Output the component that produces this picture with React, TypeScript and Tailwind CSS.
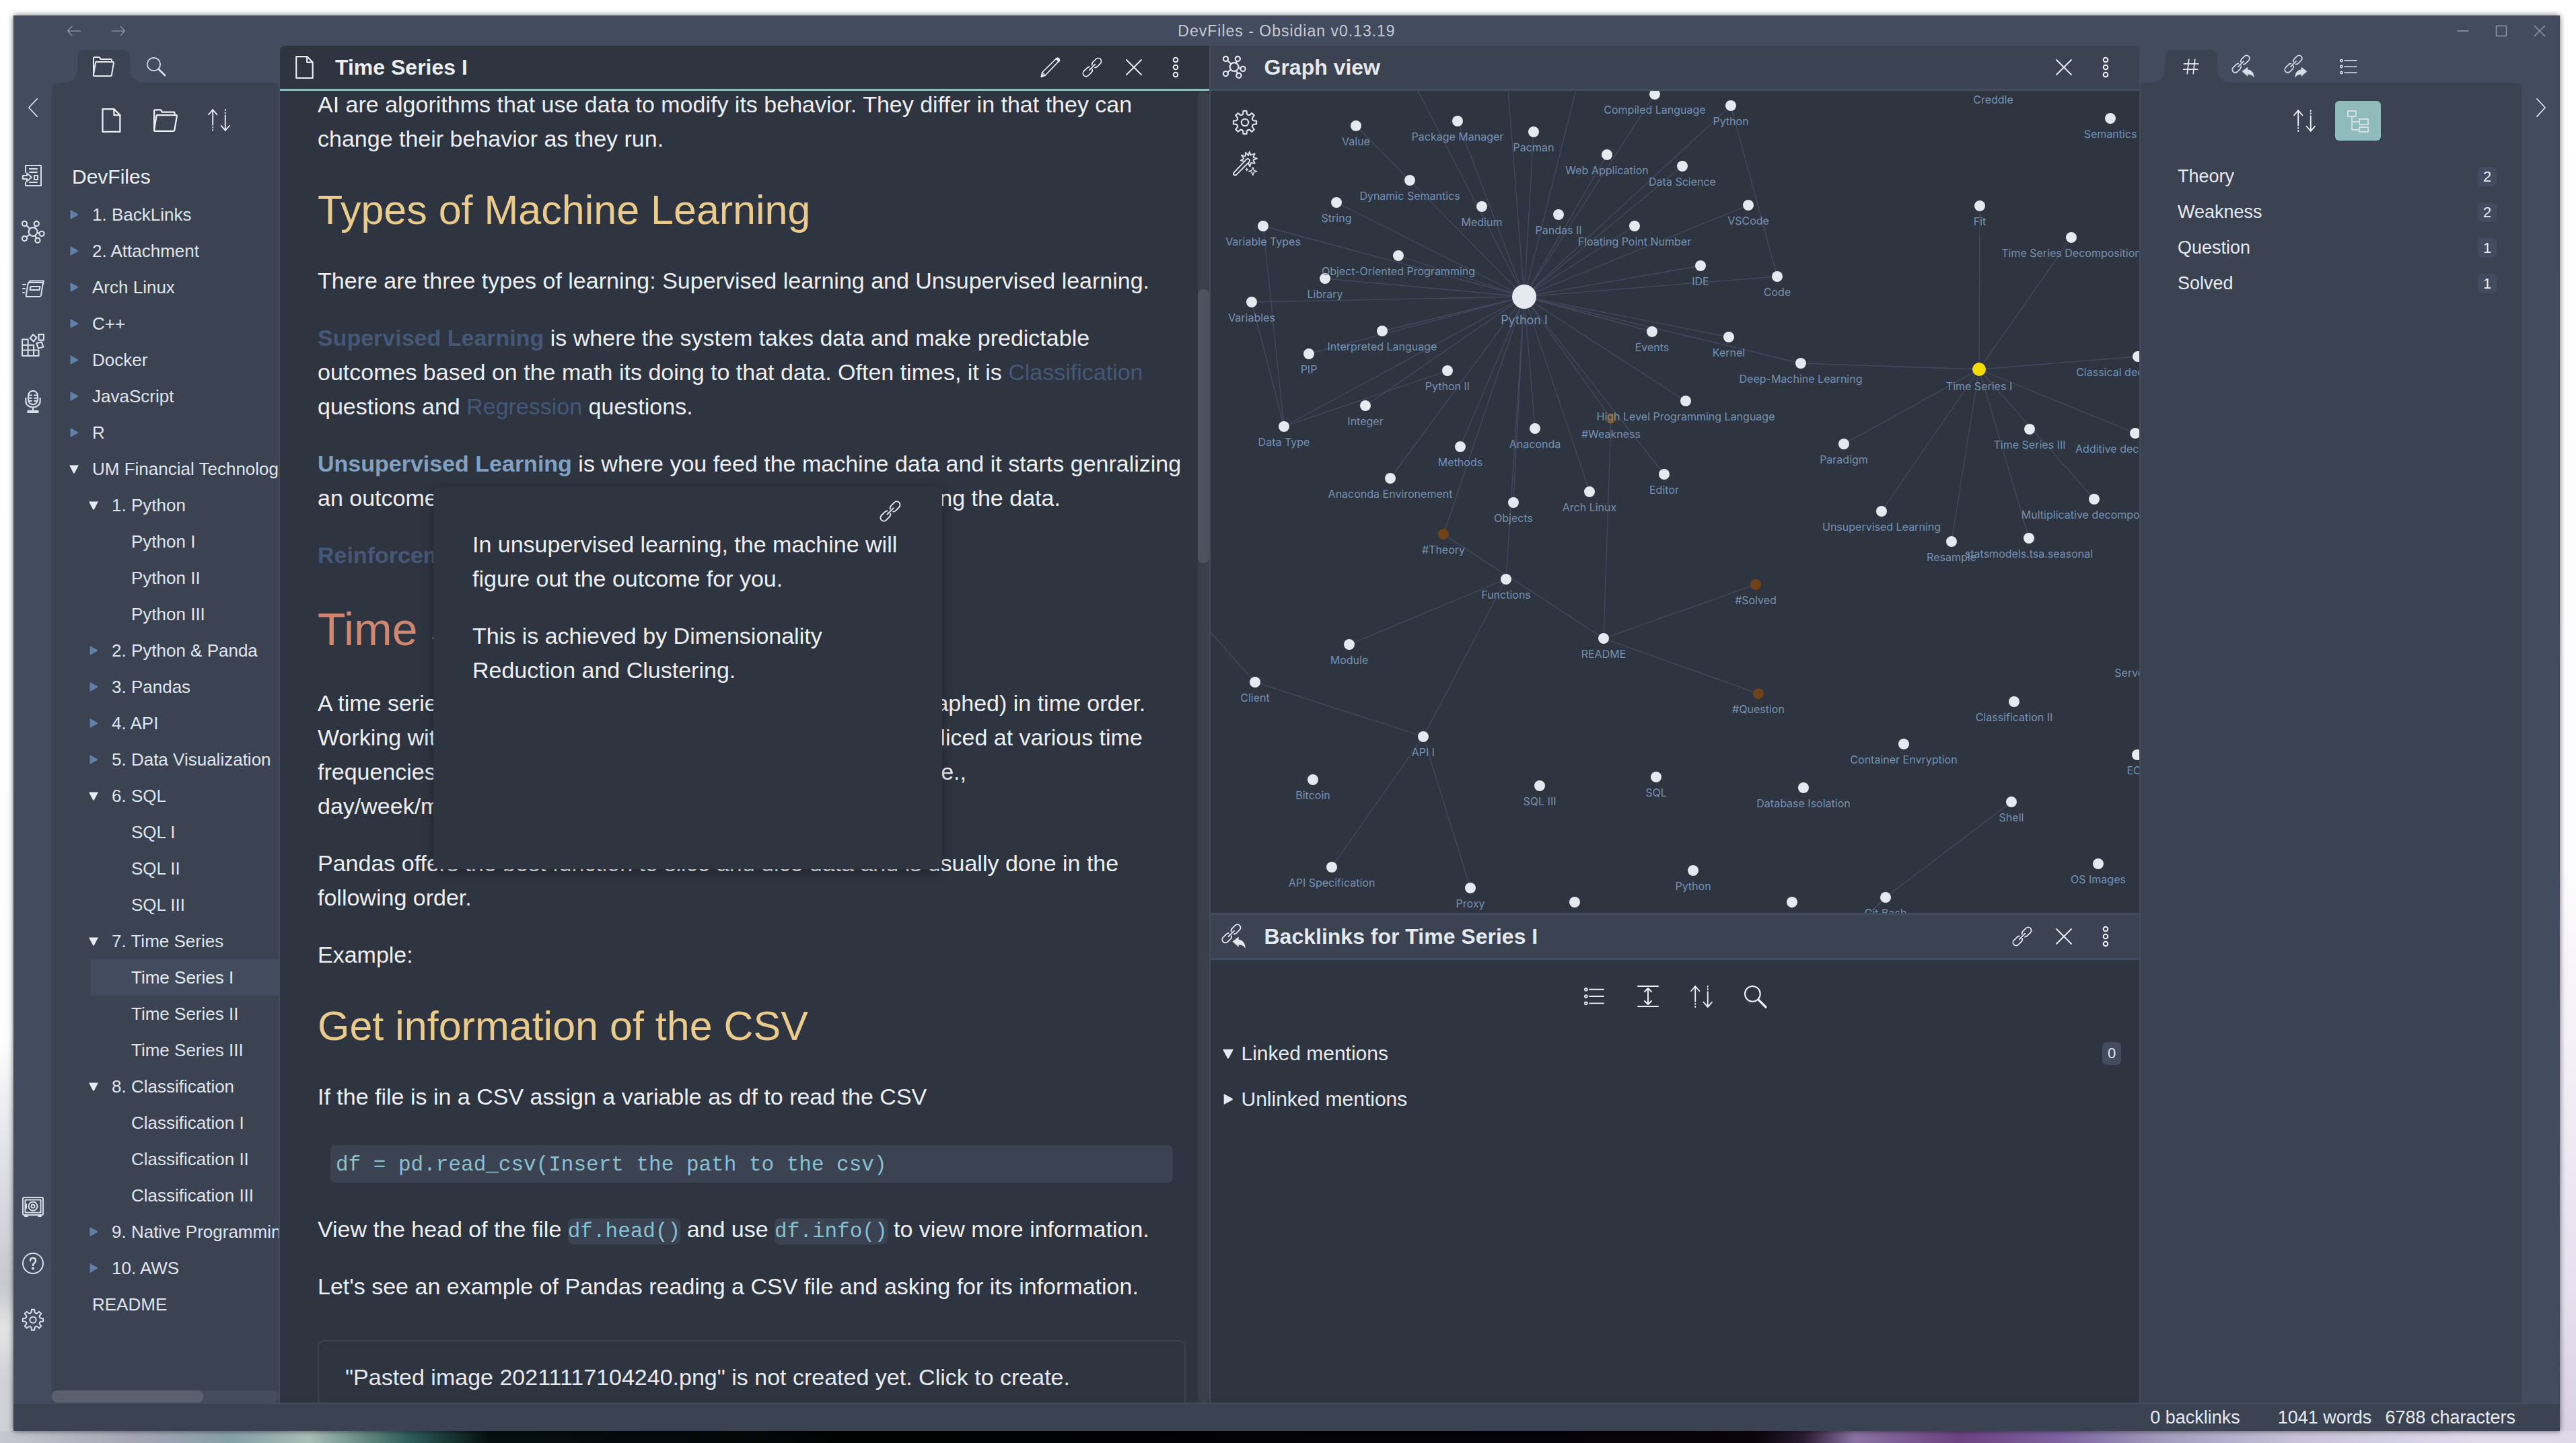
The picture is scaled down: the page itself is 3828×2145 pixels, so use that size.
import React from "react";

type IconProps = { className?: string; sw?: number; children?: React.ReactNode };

function Svg({ className = "size-8", sw = 2, children }: IconProps) {
  return (
    <svg
      viewBox="0 0 32 32"
      className={className}
      fill="none"
      stroke="currentColor"
      strokeWidth={sw}
      strokeLinecap="round"
      strokeLinejoin="round"
      overflow="visible"
      aria-hidden="true"
    >
      {children}
    </svg>
  );
}

const FileIcon = ({ className }: IconProps) => (
  <Svg className={className}>
    <path d="M4 1h15l8 8v22H4zM19 1v8h8" />
  </Svg>
);

const FolderIcon = ({ className }: IconProps) => (
  <Svg className={className}>
    <path d="M1 29V3q0-1 1-1h7q1 0 1.500 1l1 2H27q1 0 1 1v3" />
    <path d="M5 9h25q1 0 1 1l-3 18q0 2-2 2H2q-1.500 0-1-2L4 10q0-1 1-1z" />
  </Svg>
);

const SearchIcon = ({ className }: IconProps) => (
  <Svg className={className}>
    <circle cx="12" cy="12" r="11" />
    <path d="M20.500 20.500L31 31" strokeWidth="3.200" />
  </Svg>
);

const SortIcon = ({ className }: IconProps) => (
  <Svg className={className} sw={1.8}>
    <path d="M7 1v22M1 8l6-7 6 7M25 31V9M19 24l6 7 6-7" />
    <path d="M7 26v1M7 30v1M25 1v1M25 5v1" />
  </Svg>
);

const GraphIcon = ({ className }: IconProps) => (
  <Svg className={className}>
    <circle cx="16" cy="15.500" r="6" />
    <circle cx="4.200" cy="4.200" r="3.400" />
    <circle cx="21" cy="4.200" r="3.400" />
    <circle cx="28.300" cy="18.200" r="3.400" />
    <circle cx="4.200" cy="25" r="3.400" />
    <circle cx="22.500" cy="27.500" r="3.400" />
    <path d="M6.700 6.500l4.900 4.800M18.400 10l1.100-2.700M22 17l3 .5M6.800 22.700l4.700-3.200M18.600 21l2.200 3.400" />
  </Svg>
);

const Chain = () => (
  <g transform="rotate(-45 16 16)">
    <path d="M13.500 12.500Q12 11 9 11H2.500a5 5 0 0 0 0 10H9q3.500 0 4.700-2.500" />
    <path d="M18.500 19.500Q20 21 23 21h6.500a5 5 0 0 0 0-10H23q-3.500 0-4.700 2.500" />
    <path d="M9.500 16h13" />
  </g>
);

const LinkIcon = ({ className }: IconProps) => (
  <Svg className={className} sw={1.8}>
    <Chain />
  </Svg>
);

const BacklinkIcon = ({ className }: IconProps) => (
  <Svg className={className} sw={1.9}>
    <g transform="translate(-2 -2) scale(.88)">
      <Chain />
    </g>
    <path d="M14 23l8-6v3.500q9 1 9.500 11.500-3-5-9.500-4.500V30z" fill="currentColor" strokeWidth="0.500" />
  </Svg>
);

const OutlinkIcon = ({ className }: IconProps) => (
  <Svg className={className} sw={1.9}>
    <g transform="translate(-2 -2) scale(.88)">
      <Chain />
    </g>
    <path d="M32 23l-8-6v3.500q-9 1-9.500 11.500 3-5 9.500-4.500V30z" fill="currentColor" strokeWidth="0.500" />
  </Svg>
);

const CloseIcon = ({ className }: IconProps) => (
  <Svg className={className} sw={1.8}>
    <path d="M5 5l22 22M27 5L5 27" />
  </Svg>
);

const DotsIcon = ({ className }: IconProps) => (
  <Svg className={className}>
    <circle cx="16" cy="5" r="3.300" />
    <circle cx="16" cy="16" r="3.300" />
    <circle cx="16" cy="27" r="3.300" />
  </Svg>
);

const PencilIcon = ({ className }: IconProps) => (
  <Svg className={className} sw={1.7}>
    <path d="M1.500 31l1.500-7L25.500 2q2-1.500 3.800.3 1.700 1.700.2 3.700L7.500 29z" />
    <path d="M3 24l4.500 5" />
    <path d="M25 2.500l4.500 4.500 1-2.500-3-3zM1.500 31l1-4 2.700 2.800z" fill="currentColor" />
  </Svg>
);

const ListIcon = ({ className }: IconProps) => (
  <Svg className={className}>
    <circle cx="3" cy="5" r="2" />
    <circle cx="3" cy="16" r="2" />
    <circle cx="3" cy="27" r="2" />
    <path d="M8.500 5H31M8.500 16H31M8.500 27H31" />
  </Svg>
);

const HashIcon = ({ className }: IconProps) => (
  <Svg className={className} sw={2.2}>
    <path d="M12 3l-3 26M23 3l-3 26M3 11h26M2 21h26" />
  </Svg>
);

const TreeIcon = ({ className }: IconProps) => (
  <Svg className={className} sw={1.9}>
    <path d="M1 1h12v8H1zM18 13h13v8H18zM18 25h13v7H18zM7 9v20h11M7 17h11" />
  </Svg>
);

const ExpandIcon = ({ className }: IconProps) => (
  <Svg className={className}>
    <path d="M1 1h30M1 31h30M16 4v24M11 9l5-5 5 5M11 23l5 5 5-5" />
  </Svg>
);

const polar = (r: number, deg: number) => {
  const a = (deg * Math.PI) / 180;
  return `${(16 + r * Math.cos(a)).toFixed(2)} ${(16 + r * Math.sin(a)).toFixed(2)}`;
};
const gearPath =
  "M" +
  Array.from({ length: 8 }, (_, i) => {
    const d = i * 45;
    return [
      polar(11.5, d - 13),
      polar(15.3, d - 8),
      polar(15.3, d + 8),
      polar(11.5, d + 13),
      polar(10.6, d + 22.5),
    ].join("L");
  }).join("L") +
  "Z";

const GearIcon = ({ className }: IconProps) => (
  <Svg className={className}>
    <path d={gearPath} />
    <circle cx="16" cy="16" r="4.600" />
  </Svg>
);

const WandIcon = ({ className }: IconProps) => (
  <Svg className={className} sw={1.7}>
    <path d="M1.500 28L18 10.500q2-1.500 3.500 0t0 3.500L4.500 31q-1.500 1-3 0t0-3z" />
    <path d="M14.500 13l-4-1 4-2.500-3-4.500 5 1.500.5-5 3.500 4L22 .5l1.500 4.500L29 3l-2 5 5 1.500-5 2 2 4.500-5-1-1.500 5-2-4" />
    <path d="M26.500 21l1.300 4 4 1.300-4 1.300-1.300 4-1.300-4-4-1.300 4-1.300zM18.500 22.500v3M17 24h3" strokeWidth="1.300" />
  </Svg>
);

const SwitcherIcon = ({ className }: IconProps) => (
  <Svg className={className}>
    <path d="M5 11V1h23v30H5v-5M11 6h11M11 11h11M11 26h11M18 16h5v6h-5z" />
    <path d="M1 16h6v-3.500l7 6-7 6V21H1z" />
  </Svg>
);

const CardsIcon = ({ className }: IconProps) => (
  <Svg className={className}>
    <path d="M12 7h19l-3 19q-.4 2-2 2H7q-1.500 0-1.200-2L8.500 9q.5-2 3.500-2zM10 7q.5-2.500 2.500-2.500H32l-1 5M12.500 13h14l-1 5H11.500z" />
    <path d="M1 10h4M1 16h3M1 22h2" />
  </Svg>
);

const BlocksIcon = ({ className }: IconProps) => (
  <Svg className={className}>
    <path d="M1 8h8v23M1 8v23h23v-8H1M1 16h16v15M24 1h7v8h-7zM16 1l5 4.500-4 5.500-5-4.500zM21 13.500l7-2 2.500 7-7 2z" />
  </Svg>
);

const MicIcon = ({ className }: IconProps) => (
  <Svg className={className}>
    <rect x="9.500" y="1" width="13" height="19" rx="6.500" />
    <path d="M6 11v4.500a10 8.500 0 0 0 20 0V11M16 24v4M9 31h14v-2H9zM10 7h4M18 7h4M10 11h4M18 11h4M10 15h4M18 15h4" />
  </Svg>
);

const VaultIcon = ({ className }: IconProps) => (
  <Svg className={className}>
    <rect x="1" y="2" width="30" height="26" rx="2" />
    <rect x="4.500" y="5.500" width="23" height="19" />
    <circle cx="16" cy="15" r="6.500" />
    <circle cx="16" cy="15" r="2.500" />
    <path d="M4 28v2h4M28 28v2h-4M6 12v6" />
  </Svg>
);

const HelpIcon = ({ className }: IconProps) => (
  <Svg className={className}>
    <circle cx="16" cy="16" r="15" />
    <path d="M12 12q0-4 4-4t4 4q0 2-2 3.500T16 19" strokeWidth="2.500" />
    <circle cx="16" cy="23.500" r="1" fill="currentColor" />
  </Svg>
);

function PaneButton({ label, children }: { label: string; children: React.ReactNode }) {
  return (
    <button type="button" aria-label={label} className="flex h-full w-[62px] items-center justify-center text-[#eceff4]">
      {children}
    </button>
  );
}

function PaneHeader({
  icon,
  title,
  active,
  children,
}: {
  icon: React.ReactNode;
  title: string;
  active?: boolean;
  children: React.ReactNode;
}) {
  return (
    <header
      className={
        active
          ? "flex h-[67px] shrink-0 items-center rounded-tl-lg border-b-[3px] border-[#8fbcbb] bg-[#2e3440] pr-[19px] pl-5 text-[#eceff4]"
          : "flex h-[67px] shrink-0 items-center border-b-[3px] border-[#434c5e] bg-[#3b4252] pr-[19px] pl-[18px] text-[#e5e9f0]"
      }
    >
      <span className="w-[62px] shrink-0">{icon}</span>
      <h1 className="flex-1 text-[32px] leading-10 font-bold whitespace-nowrap">{title}</h1>
      {children}
    </header>
  );
}

function ActionButton({ label, active, children }: { label: string; active?: boolean; children: React.ReactNode }) {
  return (
    <button
      type="button"
      aria-label={label}
      className={
        active
          ? "flex h-[59px] w-[68px] items-center justify-center rounded-md bg-[#8fbcbb] text-[#d8dee9]"
          : "flex h-[59px] w-[68px] items-center justify-center rounded-md text-[#eceff4]"
      }
    >
      {children}
    </button>
  );
}

function Tab({ label, active, children }: { label: string; active?: boolean; children: React.ReactNode }) {
  return (
    <button
      type="button"
      aria-label={label}
      className={
        active
          ? "relative flex h-[49px] w-[78px] items-center justify-center rounded-t-[10px] bg-[#3b4252] text-[#e5e9f0] before:absolute before:bottom-0 before:-left-5 before:size-5 before:bg-[radial-gradient(circle_at_0_0,transparent_20px,#3b4252_20px)] after:absolute after:-right-5 after:bottom-0 after:size-5 after:bg-[radial-gradient(circle_at_100%_0,transparent_20px,#3b4252_20px)]"
          : "flex h-[49px] w-[78px] items-center justify-center text-[#d8dee9]"
      }
    >
      {children}
    </button>
  );
}

function TitleBar() {
  return (
    <div className="flex h-[45px] shrink-0 items-center justify-between text-[#8f98a8]">
      <div className="flex w-[400px] items-center gap-[46px] pl-20">
        <button type="button" aria-label="Back">
          <Svg className="size-5">
            <path d="M31 16H1M11 5L1 16l10 11" />
          </Svg>
        </button>
        <button type="button" aria-label="Forward">
          <Svg className="size-5">
            <path d="M1 16h30M21 5l10 11-10 11" />
          </Svg>
        </button>
      </div>
      <div className="text-[23px] leading-7 tracking-[1px] text-[#c3cad6]">DevFiles - Obsidian v0.13.19</div>
      <div className="flex w-[400px] items-center justify-end gap-[41px] pr-[22px]">
        <button type="button" aria-label="Minimize">
          <Svg className="size-4" sw={3}>
            <path d="M0 16h32" />
          </Svg>
        </button>
        <button type="button" aria-label="Maximize">
          <Svg className="size-4" sw={3}>
            <path d="M1 1h30v30H1z" />
          </Svg>
        </button>
        <button type="button" aria-label="Close window">
          <Svg className="size-4" sw={3}>
            <path d="M1 1l30 30M31 1L1 31" />
          </Svg>
        </button>
      </div>
    </div>
  );
}

function RibbonButton({ label, children }: { label: string; children: React.ReactNode }) {
  return (
    <button type="button" aria-label={label} className="flex h-[84px] w-full items-center justify-center text-[#d8dee9]">
      {children}
    </button>
  );
}

type Entry = { name: string; kind: "open" | "closed" | "file"; active?: boolean; children?: Entry[] };

const file = (name: string, active = false): Entry => ({ name, kind: "file", active });
const closed = (name: string): Entry => ({ name, kind: "closed" });

const tree: Entry[] = [
  closed("1. BackLinks"),
  closed("2. Attachment"),
  closed("Arch Linux"),
  closed("C++"),
  closed("Docker"),
  closed("JavaScript"),
  closed("R"),
  {
    name: "UM Financial Technology",
    kind: "open",
    children: [
      { name: "1. Python", kind: "open", children: [file("Python I"), file("Python II"), file("Python III")] },
      closed("2. Python & Panda"),
      closed("3. Pandas"),
      closed("4. API"),
      closed("5. Data Visualization"),
      { name: "6. SQL", kind: "open", children: [file("SQL I"), file("SQL II"), file("SQL III")] },
      {
        name: "7. Time Series",
        kind: "open",
        children: [file("Time Series I", true), file("Time Series II"), file("Time Series III")],
      },
      {
        name: "8. Classification",
        kind: "open",
        children: [file("Classification I"), file("Classification II"), file("Classification III")],
      },
      closed("9. Native Programming"),
      closed("10. AWS"),
    ],
  },
  file("README"),
];

function Triangle({ open, className }: { open: boolean; className: string }) {
  return (
    <svg viewBox="0 0 14 14" className={className} fill="currentColor" aria-hidden="true">
      {open ? <path d="M0 1.500h14L8 13q-1 1.500-2 0z" /> : <path d="M1.500 0L12.500 6q1 1 0 2L1.500 14z" />}
    </svg>
  );
}

function TreeList({ items }: { items: Entry[] }) {
  return (
    <ul>
      {items.map((item) => (
        <li key={item.name}>
          <button
            type="button"
            className={
              item.active
                ? "flex h-[54px] w-full items-center bg-[#434c5e] pl-[26px] text-left text-[26px] leading-[54px] whitespace-nowrap text-[#e5e9f0]"
                : "flex h-[54px] w-full items-center pl-[26px] text-left text-[26px] leading-[54px] whitespace-nowrap text-[#dfe4ed]"
            }
          >
            <span className="w-[34px] shrink-0">
              {item.kind !== "file" && (
                <Triangle
                  open={item.kind === "open"}
                  className={item.kind === "open" ? "size-3.5 text-[#e5e9f0]" : "size-3.5 text-[#5e81ac]"}
                />
              )}
            </span>
            {item.name}
          </button>
          {item.children && (
            <div className="ml-[29px]">
              <TreeList items={item.children} />
            </div>
          )}
        </li>
      ))}
    </ul>
  );
}

function LeftSidebar() {
  return (
    <aside className="flex w-[339px] shrink-0 flex-col border-r-2 border-[#434c5e]">
      <div className="flex h-[55px] shrink-0 items-end pl-[38px]">
        <Tab label="File explorer" active>
          <FolderIcon className="size-8" />
        </Tab>
        <Tab label="Search">
          <SearchIcon className="size-7" />
        </Tab>
      </div>
      <div className="flex min-h-0 flex-1 flex-col overflow-hidden rounded-tl-[10px] bg-[#3b4252]">
        <div className="mt-[26px] flex justify-center gap-3">
          <ActionButton label="New note">
            <FileIcon className="size-9" />
          </ActionButton>
          <ActionButton label="New folder">
            <FolderIcon className="size-9" />
          </ActionButton>
          <ActionButton label="Change sort order">
            <SortIcon className="size-[33px]" />
          </ActionButton>
        </div>
        <div className="mt-9 mb-2.5 pl-[30px] text-[30px] leading-[38px] text-[#eceff4]">DevFiles</div>
        <nav aria-label="Files" className="min-h-0 flex-1 overflow-hidden">
          <TreeList items={tree} />
        </nav>
        <div className="h-[18px] shrink-0 rounded-lg bg-[#444c5c]">
          <div className="h-full w-2/3 rounded-lg bg-[#5a606d]" />
        </div>
      </div>
    </aside>
  );
}

function Faded({ children }: { children: React.ReactNode }) {
  return (
    <a href="#" className="text-[#455877]">
      {children}
    </a>
  );
}

function Code({ children }: { children: React.ReactNode }) {
  return (
    <code className="rounded-lg bg-[#3b4252] py-0.5 font-['Liberation_Mono',monospace] text-[31px] leading-none text-[#88c0d0]">
      {children}
    </code>
  );
}

function Popover() {
  return (
    <div className="absolute top-[589px] left-[228px] h-[568px] w-[756px] rounded-lg bg-[#2e3440] px-[58px] pt-[60px] text-[34px] leading-[51px] shadow-[0_4px_16px_rgba(0,0,0,0.3)]">
      <a href="#" aria-label="Open link" className="absolute top-5 right-[61px]">
        <LinkIcon className="size-8" />
      </a>
      <p className="mb-[34px]">In unsupervised learning, the machine will figure out the outcome for you.</p>
      <p>This is achieved by Dimensionality Reduction and Clustering.</p>
    </div>
  );
}

function NotePane() {
  return (
    <section className="relative flex min-w-0 flex-1 basis-0 flex-col border-r-2 border-[#434c5e] bg-[#434c5e]">
      <PaneHeader active icon={<FileIcon className="size-[34px]" />} title="Time Series I">
        <PaneButton label="Edit">
          <PencilIcon className="size-[30px]" />
        </PaneButton>
        <PaneButton label="Link with tab">
          <LinkIcon className="size-[30px]" />
        </PaneButton>
        <PaneButton label="Close">
          <CloseIcon className="size-8" />
        </PaneButton>
        <PaneButton label="More options">
          <DotsIcon className="size-8" />
        </PaneButton>
      </PaneHeader>
      <div className="relative flex min-h-0 flex-1 overflow-hidden bg-[#2e3440] text-[#eceff4]">
        <article className="-mt-[5px] min-w-0 flex-1 pr-[18px] pl-14 text-[34px] leading-[51px]">
          <p>
            AI are algorithms that use data to modify its behavior. They differ in that they can change their behavior as
            they run.
          </p>
          <h2 className="my-[34px] text-[61px] leading-[92px] text-[#ebcb8b]">Types of Machine Learning</h2>
          <p className="mb-[34px]">
            There are three types of learning: Supervised learning and Unsupervised learning.
          </p>
          <p className="mb-[34px]">
            <strong>
              <Faded>Supervised Learning</Faded>
            </strong>{" "}
            is where the system takes data and make predictable outcomes based on the math its doing to that data. Often
            times, it is <Faded>Classification</Faded> questions and <Faded>Regression</Faded> questions.
          </p>
          <p className="mb-[34px]">
            <a href="#" className="font-bold text-[#81a1c1]">
              Unsupervised Learning
            </a>{" "}
            is where you feed the machine data and it starts genralizing an outcome without being told what to look for by
            understanding the data.
          </p>
          <p>
            <strong>
              <Faded>Reinforcement Learning</Faded>
            </strong>
          </p>
          <h1 className="my-[34px] text-[68px] leading-[101px] text-[#d08770]">Time Series</h1>
          <p className="mb-[34px]">
            A time series is a series of data points indexed (or listed or graphed) in time order. Working with time series
            data in Python states that it can be sliced at various time frequencies depending on the level of detail that
            is required, i.e., <span className="whitespace-nowrap">day/week/month/year.</span>
          </p>
          <p className="mb-[34px]">
            Pandas offers the best function to slice and dice data and is usually done in the following order.
          </p>
          <p>Example:</p>
          <h2 className="my-[34px] text-[61px] leading-[92px] text-[#ebcb8b]">Get information of the CSV</h2>
          <p>If the file is in a CSV assign a variable as df to read the CSV</p>
          <pre className="mx-[19px] mt-[46px] mb-11 rounded-lg bg-[#3b4252] px-2 pt-1 font-['Liberation_Mono',monospace] text-[31px] leading-[52px] text-[#88c0d0]">
            <code className="font-['Liberation_Mono',monospace]">df = pd.read_csv(Insert the path to the csv)</code>
          </pre>
          <p className="mb-[34px]">
            View the head of the file <Code>df.head()</Code> and use <Code>df.info()</Code> to view more information.
          </p>
          <p>Let's see an example of Pandas reading a CSV file and asking for its information.</p>
          <div className="mt-[54px] rounded-[10px] border-2 border-[#3b4252] px-[39px] py-7 text-[#e5e9f0]">
            "Pasted image 20211117104240.png" is not created yet. Click to create.
          </div>
        </article>
        <div className="w-[17px] shrink-0 rounded-lg bg-[#3a3f4a] pt-[295px]">
          <div className="h-[407px] rounded-lg bg-[#4d525e]" />
        </div>
      </div>
      <div className="text-[#eceff4]">
        <div className="absolute inset-x-0 top-[67px] h-0">
          <Popover />
        </div>
      </div>
    </section>
  );
}

type GNode = [id: string, label: string, x: number, y: number, kind?: "tag" | "hub" | "current"];

const nodes: GNode[] = [
  ["value", "Value", 216, 52],
  ["pkg", "Package Manager", 367, 45],
  ["pacman", "Pacman", 480, 61],
  ["web", "Web Application", 589, 95],
  ["compiled", "Compiled Language", 660, 5],
  ["dyn", "Dynamic Semantics", 296, 133],
  ["string", "String", 187, 166],
  ["medium", "Medium", 403, 172],
  ["pandas2", "Pandas II", 517, 184],
  ["float", "Floating Point Number", 630, 201],
  ["vartypes", "Variable Types", 78, 201],
  ["oop", "Object-Oriented Programming", 279, 245],
  ["library", "Library", 170, 279],
  ["vars", "Variables", 61, 314],
  ["py1", "Python I", 466, 306, "hub"],
  ["interp", "Interpreted Language", 255, 357],
  ["pip", "PIP", 146, 391],
  ["py2", "Python II", 352, 416],
  ["events", "Events", 656, 358],
  ["integer", "Integer", 230, 468],
  ["datatype", "Data Type", 109, 499],
  ["methods", "Methods", 371, 529],
  ["anaconda", "Anaconda", 482, 502],
  ["weakness", "#Weakness", 595, 487, "tag"],
  ["anaenv", "Anaconda Environement", 267, 576],
  ["editor", "Editor", 674, 570],
  ["python", "Python", 773, 22],
  ["ds", "Data Science", 701, 112],
  ["vscode", "VSCode", 799, 170],
  ["fit", "Fit", 1143, 171],
  ["tsd", "Time Series Decomposition", 1279, 218],
  ["creddle", "Creddle", 1163, -10],
  ["sem", "Semantics", 1337, 41],
  ["ide", "IDE", 728, 260],
  ["code", "Code", 842, 276],
  ["kernel", "Kernel", 770, 366],
  ["dml", "Deep-Machine Learning", 877, 405],
  ["ts1", "Time Series I", 1142, 414, "current"],
  ["classical", "Classical decomposition", 1378, 395],
  ["hlpl", "High Level Programming Language", 706, 461],
  ["paradigm", "Paradigm", 941, 525],
  ["ts3", "Time Series III", 1217, 503],
  ["additive", "Additive decomposition", 1374, 509],
  ["objects", "Objects", 450, 612],
  ["arch", "Arch Linux", 563, 596],
  ["theory", "#Theory", 346, 659, "tag"],
  ["functions", "Functions", 439, 726],
  ["module", "Module", 206, 823],
  ["readme", "README", 584, 814],
  ["client", "Client", 66, 879],
  ["api1", "API I", 316, 960],
  ["bitcoin", "Bitcoin", 152, 1024],
  ["sql3", "SQL III", 489, 1033],
  ["sql", "SQL", 662, 1020],
  ["apispec", "API Specification", 180, 1154],
  ["proxy", "Proxy", 386, 1185],
  ["n1", "", 541, 1206],
  ["unsup", "Unsupervised Learning", 997, 625],
  ["resample", "Resample", 1101, 670],
  ["stats", "statsmodels.tsa.seasonal", 1216, 665],
  ["multi", "Multiplicative decomposition", 1313, 607],
  ["solved", "#Solved", 810, 734, "tag"],
  ["question", "#Question", 814, 896, "tag"],
  ["class2", "Classification II", 1194, 908],
  ["container", "Container Envryption", 1030, 971],
  ["ec", "EC2", 1377, 987],
  ["server", "Serverless App", 1401, 842],
  ["dbiso", "Database Isolation", 881, 1036],
  ["shell", "Shell", 1190, 1057],
  ["python3", "Python", 717, 1159],
  ["os", "OS Images", 1319, 1149],
  ["n2", "", 864, 1206],
  ["gitbash", "Git Bash", 1003, 1199],
];

const at = Object.fromEntries(nodes.map(([id, , x, y]) => [id, [x, y]])) as Record<string, [number, number]>;

const links: Record<string, string[]> = {
  py1: [
    "value", "pkg", "pacman", "web", "compiled", "string", "float", "vartypes", "oop", "library", "vars", "interp",
    "pip", "events", "integer", "datatype", "methods", "anaconda", "weakness", "anaenv", "editor", "python", "ds",
    "vscode", "ide", "code", "kernel", "dml", "hlpl", "objects", "arch", "theory", "functions",
  ],
  datatype: ["py2", "vars", "vartypes"],
  python: ["code"],
  readme: ["weakness", "theory", "solved", "question"],
  functions: ["module", "api1"],
  api1: ["client", "apispec", "proxy"],
  ts1: ["fit", "tsd", "classical", "additive", "multi", "resample", "stats", "unsup", "paradigm", "dml"],
  shell: ["gitbash"],
};

const looseEnds: [string, number, number][] = [
  ["py1", 307, -2],
  ["py1", 442, -2],
  ["py1", 543, -2],
  ["client", 0, 805],
  ["gitbash", 980, 1222],
];

function nodeFill(kind?: string) {
  if (kind === "tag") return "#6f4218";
  if (kind === "current") return "#f5dd00";
  return "#e5e9f0";
}

function Graph() {
  return (
    <svg className="absolute inset-0 size-full" role="img" aria-label="Graph of linked notes">
      <g stroke="#434a60" strokeWidth="1.300">
        {Object.entries(links).flatMap(([from, targets]) =>
          targets.map((to) => (
            <line key={from + to} x1={at[from][0]} y1={at[from][1]} x2={at[to][0]} y2={at[to][1]} />
          )),
        )}
        {looseEnds.map(([from, x, y]) => (
          <line key={from + x} x1={at[from][0]} y1={at[from][1]} x2={x} y2={y} />
        ))}
      </g>
      {nodes.map(([id, , x, y, kind]) => (
        <circle key={id} cx={x} cy={y} r={kind === "hub" ? 18 : kind === "current" ? 10 : 8} fill={nodeFill(kind)} />
      ))}
      <g fill="#7492b3" textAnchor="middle" className="font-['Inter',sans-serif] text-[16px]">
        {nodes.map(([id, label, x, y, kind]) =>
          kind === "hub" ? (
            <text key={id} x={x} y={y + 41} className="text-[18px]">
              {label}
            </text>
          ) : (
            <text key={id} x={x} y={kind === "current" ? y + 31 : y + 29}>
              {label}
            </text>
          ),
        )}
      </g>
    </svg>
  );
}

function GraphColumn() {
  return (
    <div className="flex min-w-0 flex-1 basis-0 flex-col border-r-2 border-[#434c5e] bg-[#2e3440]">
      <section className="flex min-h-0 flex-[16] flex-col">
        <PaneHeader icon={<GraphIcon className="size-[34px]" />} title="Graph view">
          <PaneButton label="Close">
            <CloseIcon className="size-8" />
          </PaneButton>
          <PaneButton label="More options">
            <DotsIcon className="size-8" />
          </PaneButton>
        </PaneHeader>
        <div className="relative min-h-0 flex-1 overflow-hidden">
          <Graph />
          <div className="absolute top-[29px] left-[33px] flex flex-col gap-[25px] text-[#d8dee9]">
            <button type="button" aria-label="Graph settings">
              <GearIcon className="size-9" />
            </button>
            <button type="button" aria-label="Animate">
              <WandIcon className="size-9" />
            </button>
          </div>
        </div>
      </section>
      <section className="flex min-h-0 flex-[9] flex-col border-t-[3px] border-[#434c5e]">
        <PaneHeader icon={<BacklinkIcon className="size-[34px]" />} title="Backlinks for Time Series I">
          <PaneButton label="Link with tab">
            <LinkIcon className="size-[30px]" />
          </PaneButton>
          <PaneButton label="Close">
            <CloseIcon className="size-8" />
          </PaneButton>
          <PaneButton label="More options">
            <DotsIcon className="size-8" />
          </PaneButton>
        </PaneHeader>
        <div className="mt-[25px] mb-[21px] flex justify-center gap-3">
          <ActionButton label="Collapse results">
            <ListIcon className="size-[30px]" />
          </ActionButton>
          <ActionButton label="Show more context">
            <ExpandIcon className="size-8" />
          </ActionButton>
          <ActionButton label="Change sort order">
            <SortIcon className="size-[33px]" />
          </ActionButton>
          <ActionButton label="Search">
            <SearchIcon className="size-[33px]" />
          </ActionButton>
        </div>
        <button
          type="button"
          className="flex h-[68px] items-center gap-3 pr-[27px] pl-[18px] text-[30px] text-[#e5e9f0]"
        >
          <Triangle open className="size-4" />
          Linked mentions
          <Count large>0</Count>
        </button>
        <button
          type="button"
          className="flex h-[68px] items-center gap-3 pr-[27px] pl-[18px] text-[30px] text-[#e5e9f0]"
        >
          <Triangle open={false} className="size-4" />
          Unlinked mentions
        </button>
      </section>
    </div>
  );
}

function Count({ large, children }: { large?: boolean; children: React.ReactNode }) {
  return (
    <span
      className={
        large
          ? "ml-auto flex h-[34px] w-7 items-center justify-center rounded-md bg-[#434c5e] text-[22px] text-[#e5e9f0]"
          : "ml-auto flex h-[29px] w-7 items-center justify-center rounded-md bg-[#434c5e] text-[22px] text-[#e5e9f0]"
      }
    >
      {children}
    </span>
  );
}

const tags: [string, number][] = [
  ["Theory", 2],
  ["Weakness", 2],
  ["Question", 1],
  ["Solved", 1],
];

function RightSidebar() {
  return (
    <aside className="flex w-[566px] shrink-0 flex-col">
      <div className="flex h-[55px] shrink-0 items-end pl-9">
        <Tab label="Tags" active>
          <HashIcon className="size-[26px]" />
        </Tab>
        <Tab label="Backlinks">
          <BacklinkIcon className="size-8" />
        </Tab>
        <Tab label="Outgoing links">
          <OutlinkIcon className="size-8" />
        </Tab>
        <Tab label="Outline">
          <ListIcon className="size-[26px]" />
        </Tab>
      </div>
      <div className="flex-1 rounded-tr-[10px] bg-[#3b4252]">
        <div className="mt-[27px] mb-[27px] flex justify-center gap-3">
          <ActionButton label="Change sort order">
            <SortIcon className="size-[33px]" />
          </ActionButton>
          <ActionButton label="Show nested tags" active>
            <TreeIcon className="size-8" />
          </ActionButton>
        </div>
        <ul className="pr-[37px] pl-[55px]">
          {tags.map(([name, count]) => (
            <li key={name}>
              <button type="button" className="flex h-[53px] w-full items-center text-[27px] text-[#e5e9f0]">
                {name}
                <Count>{count}</Count>
              </button>
            </li>
          ))}
        </ul>
      </div>
    </aside>
  );
}

export default function App() {
  return (
    <div className="flex h-screen pt-[23px] pr-6 pb-[18px] pl-5 font-['Liberation_Sans',Arial,sans-serif] [background:linear-gradient(90deg,#c6c7d0_0%,#a8a7b6_5%,#86a0a8_9%,#a8bfb6_12%,#2b5a58_16%,#06110f_19%,#020303_34%,#05030a_60%,#0a0409_68%,#2b1b33_70%,#8a73a4_72%,#6d4380_76%,#7d63a0_80%,#a29dbd_84%,#c7c2da_89%,#dedaea_96%)_bottom/100%_18px_no-repeat,linear-gradient(180deg,#ffffff_0%,#fefefe_72%,#e8e8ee_78%,#d6d6e0_84%,#c8c8d0_89%,#e2e4e3_92%,#cfd0d8_96%)_left/50%_100%_no-repeat,linear-gradient(180deg,#ffffff_0%,#fdfcfe_60%,#e6dfee_90%,#d8cfe4_100%)]">
      <div className="flex min-w-0 flex-1 flex-col bg-[#434c5e] shadow-[0_0_8px_rgba(0,0,0,0.6)]">
        <TitleBar />
        <div className="flex min-h-0 flex-1">
          <div className="flex w-[57px] shrink-0 flex-col pt-[50px] pb-[81px]">
            <RibbonButton label="Collapse left sidebar">
              <Svg className="size-7">
                <path d="M23 1L9 16l14 15" />
              </Svg>
            </RibbonButton>
            <div className="mt-[17px] flex flex-1 flex-col">
              <RibbonButton label="Open quick switcher">
                <SwitcherIcon className="size-8" />
              </RibbonButton>
              <RibbonButton label="Open graph view">
                <GraphIcon className="size-[34px]" />
              </RibbonButton>
              <RibbonButton label="Review flashcards">
                <CardsIcon className="size-8" />
              </RibbonButton>
              <RibbonButton label="Insert template">
                <BlocksIcon className="size-[34px]" />
              </RibbonButton>
              <RibbonButton label="Start recording">
                <MicIcon className="size-[34px]" />
              </RibbonButton>
            </div>
            <RibbonButton label="Open another vault">
              <VaultIcon className="size-8" />
            </RibbonButton>
            <RibbonButton label="Help">
              <HelpIcon className="size-8" />
            </RibbonButton>
            <RibbonButton label="Settings">
              <GearIcon className="size-8" />
            </RibbonButton>
          </div>
          <LeftSidebar />
          <NotePane />
          <GraphColumn />
          <RightSidebar />
          <div className="w-[57px] shrink-0 pt-[50px]">
            <RibbonButton label="Collapse right sidebar">
              <Svg className="size-7">
                <path d="M9 1l14 15L9 31" />
              </Svg>
            </RibbonButton>
          </div>
        </div>
        <footer className="flex h-[42px] shrink-0 items-center justify-end gap-5 border-t-2 border-[#434c5e] bg-[#3b4252] pr-[66px] text-[27px] leading-[38px] text-[#e5e9f0]">
          <span className="pr-9">0 backlinks</span>
          <span>1041 words</span>
          <span>6788 characters</span>
        </footer>
      </div>
    </div>
  );
}
